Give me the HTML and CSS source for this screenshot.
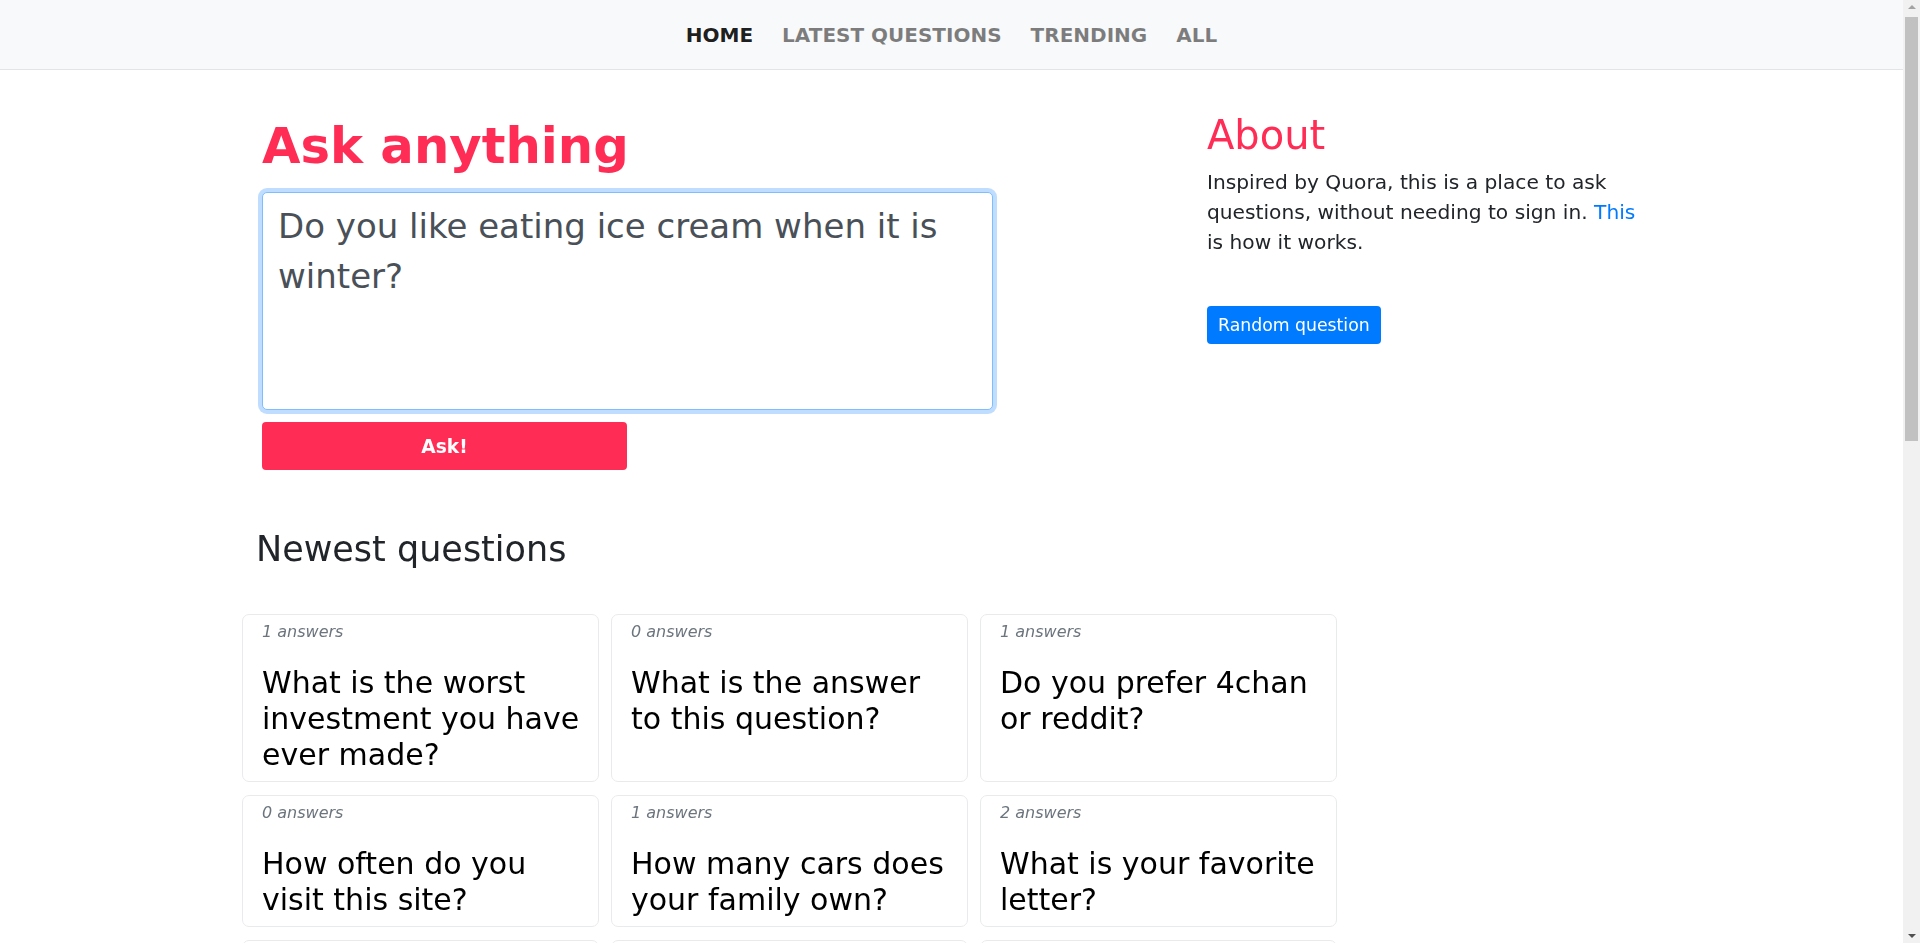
FILE: index.html
```html
<!DOCTYPE html>
<html lang="en">
<head>
<meta charset="utf-8">
<title>Ask anything</title>
<link rel="stylesheet" href="styles.css">
</head>
<body>
<header class="navbar">
  <nav class="nav">
    <a class="nav-link active" href="#">HOME</a>
    <a class="nav-link" href="#">LATEST QUESTIONS</a>
    <a class="nav-link" href="#">TRENDING</a>
    <a class="nav-link" href="#">ALL</a>
  </nav>
</header>

<main class="container">
  <div class="top-row">
    <section class="ask-col">
      <h1 class="ask-title">Ask anything</h1>
      <form class="ask-form">
        <textarea class="ask-input" id="ask-input">Do you like eating ice cream when it is winter?</textarea>
        <button class="ask-btn" type="button">Ask!</button>
      </form>
    </section>
    <aside class="about-col">
      <h2 class="about-title">About</h2>
      <p class="about-text">Inspired by Quora, this is a place to ask questions, without needing to sign in. <a class="about-link" href="#">This</a> is how it works.</p>
      <button class="btn-random" type="button">Random question</button>
    </aside>
  </div>

  <h3 class="newest-title">Newest questions</h3>

  <div class="card-grid">
    <a class="q-card" href="#"><span class="q-count">1 answers</span><h4 class="q-text">What is the worst investment you have ever made?</h4></a>
    <a class="q-card" href="#"><span class="q-count">0 answers</span><h4 class="q-text">What is the answer to this question?</h4></a>
    <a class="q-card" href="#"><span class="q-count">1 answers</span><h4 class="q-text">Do you prefer 4chan or reddit?</h4></a>
    <a class="q-card" href="#"><span class="q-count">0 answers</span><h4 class="q-text">How often do you visit this site?</h4></a>
    <a class="q-card" href="#"><span class="q-count">1 answers</span><h4 class="q-text">How many cars does your family own?</h4></a>
    <a class="q-card" href="#"><span class="q-count">2 answers</span><h4 class="q-text">What is your favorite letter?</h4></a>
    <a class="q-card" href="#"><span class="q-count">3 answers</span><h4 class="q-text">What is the best programming language?</h4></a>
    <a class="q-card" href="#"><span class="q-count">0 answers</span><h4 class="q-text">Is a hot dog a sandwich?</h4></a>
    <a class="q-card" href="#"><span class="q-count">1 answers</span><h4 class="q-text">What did you have for breakfast?</h4></a>
    <a class="q-card" href="#"><span class="q-count">2 answers</span><h4 class="q-text">Cats or dogs?</h4></a>
    <a class="q-card" href="#"><span class="q-count">0 answers</span><h4 class="q-text">What is your favorite movie?</h4></a>
    <a class="q-card" href="#"><span class="q-count">1 answers</span><h4 class="q-text">Where would you like to travel?</h4></a>
    <a class="q-card" href="#"><span class="q-count">0 answers</span><h4 class="q-text">How many hours do you sleep?</h4></a>
    <a class="q-card" href="#"><span class="q-count">4 answers</span><h4 class="q-text">What is the meaning of life?</h4></a>
    <a class="q-card" href="#"><span class="q-count">1 answers</span><h4 class="q-text">Do you like pineapple on pizza?</h4></a>
  </div>
</main>

<div class="scrollbar" aria-hidden="true">
  <span class="sb-up"></span>
  <span class="sb-thumb"></span>
  <span class="sb-down"></span>
</div>
<script src="app.js"></script>
</body>
</html>
```

FILE: styles.css
```css
* {
  box-sizing: border-box;
}

html, body {
  margin: 0;
  padding: 0;
}

body {
  padding-right: 17px;
  font-family: "DejaVu Sans", Verdana, sans-serif;
  color: #212529;
  background: #ffffff;
  font-size: 20px;
  line-height: 1.5;
}

/* Navbar */
.navbar {
  height: 70px;
  background: #f8f9fa;
  border-bottom: 1px solid #e3e4e6;
  display: flex;
  align-items: center;
  justify-content: center;
}

.nav {
  display: flex;
  gap: 29px;
}

.nav-link {
  font-size: 20px;
  font-weight: bold;
  line-height: 30px;
  color: rgba(0, 0, 0, 0.5);
  text-decoration: none;
}

.nav-link.active {
  color: rgba(0, 0, 0, 0.9);
}

/* Container */
.container {
  width: 1425px;
  margin: 0 auto;
  padding-bottom: 420px;
}

.top-row {
  display: flex;
  align-items: flex-start;
}

.ask-col {
  width: 950px;
  padding-left: 23px;
}

.ask-title {
  margin: 47px 0 16px;
  font-size: 49.7px;
  line-height: 59px;
  font-weight: bold;
  color: #ff2d55;
}

.ask-form {
  display: flex;
  flex-direction: column;
  align-items: flex-start;
}

.ask-input {
  display: block;
  width: 731px;
  height: 218px;
  margin: 0;
  padding: 8px 14px 8px 15px;
  font-family: "DejaVu Sans", Verdana, sans-serif;
  font-size: 34px;
  line-height: 50px;
  color: #495057;
  caret-color: #212529;
  background: #fff;
  border: 1px solid #80bdff;
  border-radius: 5px;
  box-shadow: 0 0 0 4px rgba(0, 123, 255, 0.25);
  outline: none;
  resize: none;
  overflow: hidden;
}

.ask-btn {
  margin-top: 12px;
  width: 365px;
  height: 48px;
  border: none;
  border-radius: 4px;
  background: #ff2d55;
  color: #fff;
  font-family: "DejaVu Sans", Verdana, sans-serif;
  font-size: 18.6px;
  font-weight: bold;
  cursor: pointer;
}

.about-col {
  width: 475px;
  padding: 0 18px;
}

.about-title {
  margin: 41px 0 8px;
  font-size: 40px;
  line-height: 48px;
  font-weight: normal;
  color: #ff2d55;
}

.about-text {
  margin: 0 0 49px;
  font-size: 20.2px;
  line-height: 30px;
  color: #212529;
}

.about-link {
  color: #007bff;
  text-decoration: none;
}

.btn-random {
  display: block;
  height: 38px;
  padding: 0 11px;
  border: none;
  border-radius: 4px;
  background: #007bff;
  color: #fff;
  font-family: "DejaVu Sans", Verdana, sans-serif;
  font-size: 17.3px;
  line-height: 38px;
  cursor: pointer;
}

/* Newest */
.newest-title {
  margin: 58px 0 44px 17px;
  font-size: 35px;
  line-height: 42px;
  font-weight: normal;
  color: #212529;
}

.card-grid {
  margin-left: 3px;
  width: 1095px;
  display: grid;
  grid-template-columns: repeat(3, 1fr);
  column-gap: 12px;
  row-gap: 13px;
}

.q-card {
  display: block;
  padding: 5px 15px 0 19px;
  border: 1px solid #e9eaec;
  border-radius: 7px;
  background: #fff;
  text-decoration: none;
  color: #000;
}

.q-count {
  display: block;
  height: 24px;
  font-size: 16px;
  line-height: 24px;
  font-style: italic;
  color: #6c757d;
}

.q-text {
  margin: 21px 0 8px;
  font-size: 30px;
  line-height: 36px;
  font-weight: normal;
  color: #000;
}

/* Drawn browser scrollbar (overlay on the right edge) */
.scrollbar {
  position: fixed;
  top: 0;
  right: 0;
  width: 17px;
  height: 100vh;
  background: #f1f1f1;
  display: flex;
  flex-direction: column;
  align-items: center;
}

.sb-up {
  display: block;
  width: 0;
  height: 0;
  margin: 5px 0 4px;
  border-left: 4px solid transparent;
  border-right: 4px solid transparent;
  border-bottom: 4px solid #a3a3a3;
}

.sb-thumb {
  display: block;
  width: 13px;
  height: 424px;
  margin-top: 4px;
  background: #c1c1c1;
}

.sb-down {
  display: block;
  width: 0;
  height: 0;
  margin-top: auto;
  margin-bottom: 5px;
  border-left: 4px solid transparent;
  border-right: 4px solid transparent;
  border-top: 4px solid #505050;
}
```

FILE: app.js
```js
var input = document.getElementById('ask-input');
if (input) {
  input.focus();
  var end = input.value.length;
  input.setSelectionRange(end, end);
}
```
